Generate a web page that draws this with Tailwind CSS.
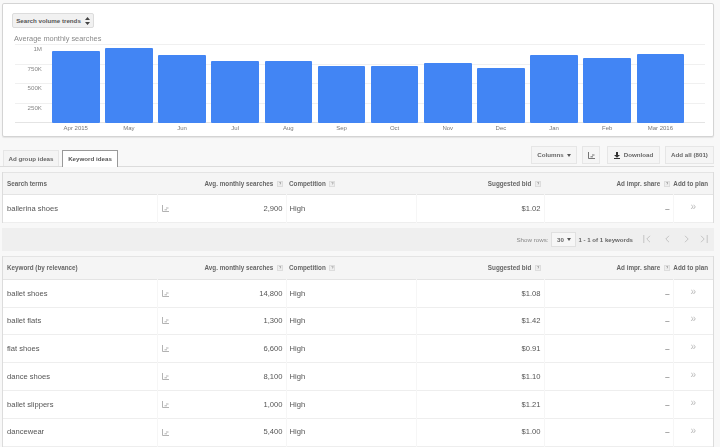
<!DOCTYPE html>
<html lang="en">
<head>
<meta charset="UTF-8">
<title>Keyword Planner</title>
<script src="https://cdn.jsdelivr.net/npm/@tailwindcss/browser@4"></script>
</head>
<body class="w-[720px] h-[447px] overflow-hidden bg-[#f8f8f8] blur-[0.3px] font-['Liberation_Sans',Arial,sans-serif] text-[#555]">

<!-- trend chart -->
<section class="mt-[3px] ml-[2px] w-[712px] h-[134px] bg-white border border-[#d4d4d4] rounded-[2px] shadow-[0_1px_1px_rgba(0,0,0,.08)] relative">
  <div class="pt-[9px] pl-[9px]">
    <button class="h-[15px] w-[82px] flex items-center justify-center gap-[4px] whitespace-nowrap bg-[#f1f1f1] border border-[#dcdcdc] rounded-[2px] text-[6.2px] font-bold text-[#555]">
      Search volume trends
      <svg width="5" height="8" viewBox="0 0 5 8" class="fill-[#444]"><path d="M2.5 0 5 3H0zM2.5 8 0 5h5z"/></svg>
    </button>
  </div>
  <p class="mt-[5px] ml-[11px] text-[7.4px] leading-[11px] text-[#8a8a8a]">Average monthly searches</p>

  <!-- gridlines and y labels -->
  <div class="absolute left-[12px] top-[40px] w-[690px] h-[79px] flex flex-col justify-between">
    <div class="h-[1px] bg-[#f0f0f0]"></div>
    <div class="h-[1px] bg-[#f0f0f0]"></div>
    <div class="h-[1px] bg-[#f0f0f0]"></div>
    <div class="h-[1px] bg-[#f0f0f0]"></div>
    <div class="h-[1px] bg-[#e4e4e4]"></div>
  </div>
  <div class="absolute left-[12px] top-[35px] w-[27px] h-[78px] flex flex-col text-right text-[6.2px] leading-[19.6px] text-[#888]">
    <span>1M</span><span>750K</span><span>500K</span><span>250K</span>
  </div>

  <!-- bars -->
  <div class="absolute left-[49px] top-[40px] w-[632px] h-[79px] flex items-end gap-[5.6px]">
    <div class="flex-1 bg-[#4285f4] rounded-[1px]" style="height:72px"></div>
    <div class="flex-1 bg-[#4285f4] rounded-[1px]" style="height:75px"></div>
    <div class="flex-1 bg-[#4285f4] rounded-[1px]" style="height:68px"></div>
    <div class="flex-1 bg-[#4285f4] rounded-[1px]" style="height:62.5px"></div>
    <div class="flex-1 bg-[#4285f4] rounded-[1px]" style="height:62px"></div>
    <div class="flex-1 bg-[#4285f4] rounded-[1px]" style="height:57px"></div>
    <div class="flex-1 bg-[#4285f4] rounded-[1px]" style="height:57.5px"></div>
    <div class="flex-1 bg-[#4285f4] rounded-[1px]" style="height:60.5px"></div>
    <div class="flex-1 bg-[#4285f4] rounded-[1px]" style="height:55.5px"></div>
    <div class="flex-1 bg-[#4285f4] rounded-[1px]" style="height:68px"></div>
    <div class="flex-1 bg-[#4285f4] rounded-[1px]" style="height:65px"></div>
    <div class="flex-1 bg-[#4285f4] rounded-[1px]" style="height:69.5px"></div>
  </div>
  <div class="absolute left-[49px] top-[120px] w-[632px] flex gap-[5.6px] text-center text-[6px] leading-[9px] text-[#777]">
    <span class="flex-1">Apr 2015</span><span class="flex-1">May</span><span class="flex-1">Jun</span><span class="flex-1">Jul</span>
    <span class="flex-1">Aug</span><span class="flex-1">Sep</span><span class="flex-1">Oct</span><span class="flex-1">Nov</span>
    <span class="flex-1">Dec</span><span class="flex-1">Jan</span><span class="flex-1">Feb</span><span class="flex-1">Mar 2016</span>
  </div>
</section>

<!-- tabs and toolbar -->
<div class="mt-[10px] h-[20px] w-[714px] flex items-end border-b border-[#dcdcdc]">
  <div class="ml-[3px] w-[56px] h-[16px] flex items-center justify-center bg-[#f4f4f4] border border-b-0 border-[#e6e6e6] text-[6.2px] font-bold text-[#666]">Ad group ideas</div>
  <div class="ml-[3px] w-[56px] h-[17px] -mb-[1px] flex items-center justify-center bg-white border border-b-0 border-[#999] text-[6.2px] font-bold text-[#555]">Keyword ideas</div>
  <div class="ml-auto self-start flex gap-[5px] -mt-[1px]">
    <button class="w-[46px] h-[18px] flex items-center justify-center gap-[3px] bg-[#f5f5f5] border border-[#e6e6e6] text-[6.2px] font-bold text-[#666]">Columns
      <svg width="4" height="3" viewBox="0 0 4 3" class="fill-[#555]"><path d="M0 0h4L2 3z"/></svg>
    </button>
    <button class="w-[18px] h-[18px] flex items-center justify-center bg-[#f5f5f5] border border-[#e6e6e6]">
      <svg width="7" height="7" viewBox="0 0 7 7" fill="none" class="stroke-[#666]"><path d="M.5 0v6.5H7M2.5 4.8H5M4 3H6.5" stroke-width=".9"/></svg>
    </button>
    <button class="ml-[2px] w-[53px] h-[18px] flex items-center justify-center gap-[4px] bg-[#f5f5f5] border border-[#e6e6e6] text-[6.2px] font-bold text-[#666]">
      <svg width="6" height="7" viewBox="0 0 6 7" class="fill-[#333]"><path d="M2 0h2v3h2L3 5.7 0 3h2zM0 6h6v1H0z"/></svg>
      Download
    </button>
    <button class="w-[49px] h-[18px] flex items-center justify-center bg-[#f5f5f5] border border-[#e6e6e6] text-[6.2px] font-bold text-[#666]">Add all (801)</button>
  </div>
</div>

<!-- search terms table -->
<div class="mt-[5px] ml-[2px] w-[712px] bg-white border-x border-[#dcdcdc]">
  <table class="w-full table-fixed border-collapse text-[7.6px] text-[#555]">
    <colgroup><col class="w-[154px]"><col class="w-[129px]"><col class="w-[130px]"><col class="w-[128px]"><col class="w-[129px]"><col></colgroup>
    <thead>
      <tr class="h-[22px] bg-[#f5f5f5] border-y border-[#e4e4e4] text-[6.3px] font-bold text-[#666]">
        <th class="pl-[4px] text-left">Search terms</th>
        <th class="text-right pr-[3px]">Avg. monthly searches <span class="inline-block w-[6px] h-[6px] ml-[2px] bg-[#eee] border border-[#ddd] text-[4px] leading-[4px] text-center font-normal align-middle">?</span></th>
        <th class="text-left pl-[3px]">Competition <span class="inline-block w-[6px] h-[6px] ml-[2px] bg-[#eee] border border-[#ddd] text-[4px] leading-[4px] text-center font-normal align-middle">?</span></th>
        <th class="text-right pr-[3px]">Suggested bid <span class="inline-block w-[6px] h-[6px] ml-[2px] bg-[#eee] border border-[#ddd] text-[4px] leading-[4px] text-center font-normal align-middle">?</span></th>
        <th class="text-right pr-[3px]">Ad impr. share <span class="inline-block w-[6px] h-[6px] ml-[2px] bg-[#eee] border border-[#ddd] text-[4px] leading-[4px] text-center font-normal align-middle">?</span></th>
        <th class="text-right pr-[5px] whitespace-nowrap">Add to plan</th>
      </tr>
    </thead>
    <tbody>
      <tr class="h-[27.8px] border-b border-[#eee]">
        <td class="pl-[4px]">ballerina shoes</td>
        <td class="pl-[4px] pr-[3px] border-l border-[#f6f6f6]"><div class="flex items-center justify-between"><svg width="7" height="7" viewBox="0 0 7 7" fill="none" class="stroke-[#aaa]"><path d="M.5 0v6.5H7M2.5 4.8H5M4 3H6.5" stroke-width=".9"/></svg><span>2,900</span></div></td>
        <td class="pl-[3px] border-l border-[#f6f6f6]">High</td>
        <td class="text-right pr-[3px] border-l border-[#f6f6f6]">$1.02</td>
        <td class="text-right pr-[3px] border-l border-[#f6f6f6]">–</td>
        <td class="text-center border-l border-[#f6f6f6] text-[#bbb] text-[10px] leading-[10px] pb-[3px]">»</td>
      </tr>
    </tbody>
  </table>
</div>

<!-- pagination -->
<div class="mt-[5px] ml-[2px] w-[712px] h-[23px] bg-[#efefef] flex items-center justify-end text-[6.2px] text-[#888]">
  <span>Show rows:</span>
  <div class="ml-[3px] w-[25px] h-[15px] flex items-center justify-center gap-[3px] bg-[#f6f6f6] border border-[#e0e0e0] font-bold text-[#666]">30
    <svg width="4" height="3" viewBox="0 0 4 3" class="fill-[#555]"><path d="M0 0h4L2 3z"/></svg>
  </div>
  <span class="ml-[2px] font-bold text-[#666] text-[6.1px]">1 - 1 of 1 keywords</span>
  <div class="ml-[10px] mr-[6px] flex gap-[9px]">
    <svg width="8" height="8" viewBox="0 0 8 8" fill="none" class="stroke-[#c4c4c4]"><path d="M.8 0v8M7 .8 3.8 4 7 7.2"/></svg>
    <svg width="8" height="8" viewBox="0 0 8 8" fill="none" class="ml-[3px] stroke-[#c4c4c4]"><path d="M6 .8 2.8 4 6 7.2"/></svg>
    <svg width="8" height="8" viewBox="0 0 8 8" fill="none" class="ml-[3px] stroke-[#c4c4c4]"><path d="M2 .8 5.2 4 2 7.2"/></svg>
    <svg width="8" height="8" viewBox="0 0 8 8" fill="none" class="stroke-[#c4c4c4]"><path d="M7.2 0v8M1 .8 4.2 4 1 7.2"/></svg>
  </div>
</div>

<!-- keyword table -->
<div class="mt-[5px] ml-[2px] w-[712px] bg-white border-x border-[#dcdcdc]">
  <table id="keywords" class="w-full table-fixed border-collapse text-[7.6px] text-[#555]">
    <colgroup><col class="w-[154px]"><col class="w-[129px]"><col class="w-[130px]"><col class="w-[128px]"><col class="w-[129px]"><col></colgroup>
    <thead>
      <tr class="h-[23px] bg-[#f5f5f5] border-y border-[#e4e4e4] text-[6.3px] font-bold text-[#666]">
        <th class="pl-[4px] text-left">Keyword (by relevance)</th>
        <th class="text-right pr-[3px]">Avg. monthly searches <span class="inline-block w-[6px] h-[6px] ml-[2px] bg-[#eee] border border-[#ddd] text-[4px] leading-[4px] text-center font-normal align-middle">?</span></th>
        <th class="text-left pl-[3px]">Competition <span class="inline-block w-[6px] h-[6px] ml-[2px] bg-[#eee] border border-[#ddd] text-[4px] leading-[4px] text-center font-normal align-middle">?</span></th>
        <th class="text-right pr-[3px]">Suggested bid <span class="inline-block w-[6px] h-[6px] ml-[2px] bg-[#eee] border border-[#ddd] text-[4px] leading-[4px] text-center font-normal align-middle">?</span></th>
        <th class="text-right pr-[3px]">Ad impr. share <span class="inline-block w-[6px] h-[6px] ml-[2px] bg-[#eee] border border-[#ddd] text-[4px] leading-[4px] text-center font-normal align-middle">?</span></th>
        <th class="text-right pr-[5px] whitespace-nowrap">Add to plan</th>
      </tr>
    </thead>
    <tbody id="rows"></tbody>
  </table>
</div>

<script>
  // keyword rows
  const keywords = [
    ['ballet shoes', '14,800', '$1.08'],
    ['ballet flats', '1,300', '$1.42'],
    ['flat shoes', '6,600', '$0.91'],
    ['dance shoes', '8,100', '$1.10'],
    ['ballet slippers', '1,000', '$1.21'],
    ['dancewear', '5,400', '$1.00']
  ];
  document.getElementById('rows').innerHTML = keywords.map(k => `
    <tr class="h-[27.8px] border-b border-[#eee]">
      <td class="pl-[4px]">${k[0]}</td>
      <td class="pl-[4px] pr-[3px] border-l border-[#f6f6f6]"><div class="flex items-center justify-between"><svg width="7" height="7" viewBox="0 0 7 7" fill="none" class="stroke-[#aaa]"><path d="M.5 0v6.5H7M2.5 4.8H5M4 3H6.5" stroke-width=".9"/></svg><span>${k[1]}</span></div></td>
      <td class="pl-[3px] border-l border-[#f6f6f6]">High</td>
      <td class="text-right pr-[3px] border-l border-[#f6f6f6]">${k[2]}</td>
      <td class="text-right pr-[3px] border-l border-[#f6f6f6]">–</td>
      <td class="text-center border-l border-[#f6f6f6] text-[#bbb] text-[10px] leading-[10px] pb-[3px]">»</td>
    </tr>`).join('');
</script>
</body>
</html>
